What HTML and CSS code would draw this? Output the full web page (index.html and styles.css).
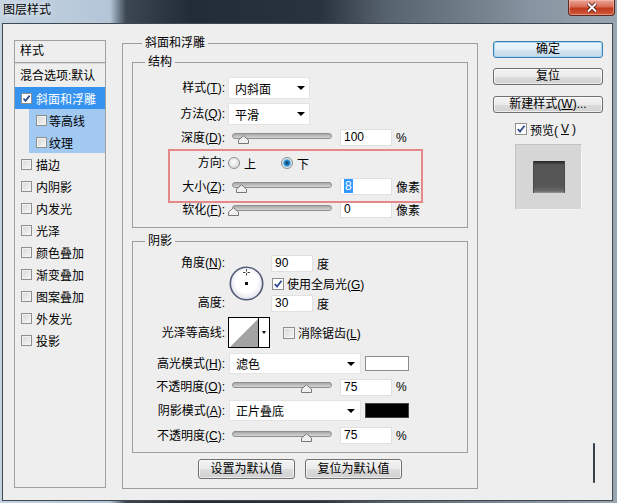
FILE: index.html
```html
<!DOCTYPE html>
<html lang="zh-CN">
<head>
  <meta charset="UTF-8">
  <title>图层样式</title>
  <link rel="stylesheet" href="styles.css">
</head>
<body>
  <div class="titlebar">
    <span class="title">图层样式</span>
    <button class="close-btn">
      <svg width="14" height="11" viewBox="0 0 14 11">
        <path d="M3 1.5L11 9.5M11 1.5L3 9.5" stroke="#4b1810" stroke-width="3.6"/>
        <path d="M3 1.5L11 9.5M11 1.5L3 9.5" stroke="#fff" stroke-width="1.8"/>
      </svg>
    </button>
  </div>

  <div class="client">
    <!-- left: style list -->
    <div class="style-list">
      <div class="list-head">样式</div>
      <div class="list-item blend">混合选项:默认</div>
      <div class="list-item active">
        <span class="check small on"><svg width="9" height="9" viewBox="0 0 9 9"><path d="M1.5 4.5L3.5 6.8L7.6 1.6" fill="none" stroke="#2c4a90" stroke-width="1.7"/></svg></span>斜面和浮雕
      </div>
      <div class="list-item sub"><span class="check small"></span>等高线</div>
      <div class="list-item sub"><span class="check small"></span>纹理</div>
      <div class="list-item"><span class="check small"></span>描边</div>
      <div class="list-item"><span class="check small"></span>内阴影</div>
      <div class="list-item"><span class="check small"></span>内发光</div>
      <div class="list-item"><span class="check small"></span>光泽</div>
      <div class="list-item"><span class="check small"></span>颜色叠加</div>
      <div class="list-item"><span class="check small"></span>渐变叠加</div>
      <div class="list-item"><span class="check small"></span>图案叠加</div>
      <div class="list-item"><span class="check small"></span>外发光</div>
      <div class="list-item"><span class="check small"></span>投影</div>
    </div>

    <!-- middle: bevel and emboss settings -->
    <div class="group main">
      <div class="group-title">斜面和浮雕</div>

      <div class="group inner structure">
        <div class="group-title">结构</div>

        <div class="row r-select first">
          <span class="lbl">样式(<u>T</u>):</span>
          <div class="select narrow"><span>内斜面</span><i class="caret"></i></div>
        </div>
        <div class="row r-select gap4">
          <span class="lbl">方法(<u>Q</u>):</span>
          <div class="select narrow"><span>平滑</span><i class="caret"></i></div>
        </div>
        <div class="row r-slider gap3">
          <span class="lbl">深度(<u>D</u>):</span>
          <div class="slider">
            <div class="track"></div>
            <span class="thumb" style="left:11%"><svg width="11" height="9" viewBox="0 0 11 9"><path d="M0.5 8.5V5L5.5 0.8L10.5 5V8.5Z" fill="#f0f0f0" stroke="#777"/></svg></span>
          </div>
          <span class="num-input">100</span>
          <span class="unit">%</span>
        </div>
        <div class="row r-radio gap6">
          <span class="lbl">方向:</span>
          <span class="radio"></span><span class="opt">上</span>
          <span class="radio on"></span><span class="opt">下</span>
        </div>
        <div class="row r-slider gap4">
          <span class="lbl">大小(<u>Z</u>):</span>
          <div class="slider">
            <div class="track"></div>
            <span class="thumb" style="left:9%"><svg width="11" height="9" viewBox="0 0 11 9"><path d="M0.5 8.5V5L5.5 0.8L10.5 5V8.5Z" fill="#f0f0f0" stroke="#777"/></svg></span>
          </div>
          <span class="num-input"><span class="sel">8</span></span>
          <span class="unit">像素</span>
        </div>
        <div class="row r-slider gap4">
          <span class="lbl">软化(<u>F</u>):</span>
          <div class="slider">
            <div class="track"></div>
            <span class="thumb" style="left:1%"><svg width="11" height="9" viewBox="0 0 11 9"><path d="M0.5 8.5V5L5.5 0.8L10.5 5V8.5Z" fill="#f0f0f0" stroke="#777"/></svg></span>
          </div>
          <span class="num-input">0</span>
          <span class="unit">像素</span>
        </div>
      </div>

      <div class="group inner shading">
        <div class="group-title">阴影</div>

        <div class="angle-block">
          <div class="lbl-col">
            <span class="lbl">角度(<u>N</u>):</span>
            <span class="lbl">高度:</span>
          </div>
          <svg class="dial" width="36" height="36" viewBox="0 0 36 36">
            <defs>
              <radialGradient id="dialFill" cx="50%" cy="45%" r="55%">
                <stop offset="0.6" stop-color="#ffffff"/>
                <stop offset="1" stop-color="#dde0ea"/>
              </radialGradient>
            </defs>
            <circle cx="17.5" cy="17.5" r="16.2" fill="url(#dialFill)" stroke="#535b78" stroke-width="1.6"/>
            <rect x="16" y="16" width="3" height="3" fill="#111"/>
            <path d="M17.5 3v2.5M17.5 7v2.5M14 6.5h2.5M18.5 6.5h2.5" stroke="#444" stroke-width="1"/>
          </svg>
          <div class="angle-fields">
            <div class="field-row"><span class="num-input short">90</span><span class="unit">度</span></div>
            <div class="field-row">
              <span class="check on"><svg width="10" height="10" viewBox="0 0 10 10"><path d="M1.8 5L4 7.5L8.5 1.8" fill="none" stroke="#2c4a90" stroke-width="1.8"/></svg></span>
              <span class="check-text">使用全局光(<u>G</u>)</span>
            </div>
            <div class="field-row"><span class="num-input short">30</span><span class="unit">度</span></div>
          </div>
        </div>

        <div class="row r-contour">
          <span class="lbl">光泽等高线:</span>
          <div class="contour">
            <svg class="contour-graph" width="31" height="31" viewBox="0 0 31 31">
              <rect x="0.5" y="0.5" width="30" height="30" fill="#fff" stroke="#000"/>
              <polygon points="2,30 30,2 30,30" fill="#a3a3a3"/>
            </svg>
            <span class="contour-drop"><i class="caret tiny"></i></span>
          </div>
          <span class="check aa"></span>
          <span class="check-text">消除锯齿(<u>L</u>)</span>
        </div>

        <div class="row r-mode gap5">
          <span class="lbl">高光模式(<u>H</u>):</span>
          <div class="select wide"><span>滤色</span><i class="caret"></i></div>
          <span class="swatch white"></span>
        </div>
        <div class="row r-opacity gap4">
          <span class="lbl">不透明度(<u>O</u>):</span>
          <div class="slider">
            <div class="track"></div>
            <span class="thumb" style="left:74%"><svg width="11" height="9" viewBox="0 0 11 9"><path d="M0.5 8.5V5L5.5 0.8L10.5 5V8.5Z" fill="#f0f0f0" stroke="#777"/></svg></span>
          </div>
          <span class="num-input">75</span>
          <span class="unit">%</span>
        </div>
        <div class="row r-mode gap4">
          <span class="lbl">阴影模式(<u>A</u>):</span>
          <div class="select wide"><span>正片叠底</span><i class="caret"></i></div>
          <span class="swatch black"></span>
        </div>
        <div class="row r-opacity2 gap6">
          <span class="lbl">不透明度(<u>C</u>):</span>
          <div class="slider">
            <div class="track"></div>
            <span class="thumb" style="left:74%"><svg width="11" height="9" viewBox="0 0 11 9"><path d="M0.5 8.5V5L5.5 0.8L10.5 5V8.5Z" fill="#f0f0f0" stroke="#777"/></svg></span>
          </div>
          <span class="num-input">75</span>
          <span class="unit">%</span>
        </div>
      </div>

      <div class="default-btns">
        <button class="btn wide">设置为默认值</button>
        <button class="btn wide">复位为默认值</button>
      </div>
    </div>

    <!-- right: dialog buttons and preview -->
    <div class="side">
      <button class="btn default">确定</button>
      <button class="btn">复位</button>
      <button class="btn">新建样式(<u>W</u>)...</button>
      <div class="preview-toggle">
        <span class="check on"><svg width="10" height="10" viewBox="0 0 10 10"><path d="M1.8 5L4 7.5L8.5 1.8" fill="none" stroke="#2c4a90" stroke-width="1.8"/></svg></span>
        预览(<u>V</u>)
      </div>
      <div class="preview-box"><div class="preview-swatch"></div></div>
    </div>

    <!-- annotation drawn over the screenshot -->
    <div class="annotation"></div>
    <div class="stray-mark"></div>
  </div>
</body>
</html>
```

FILE: styles.css
```css
* {
  box-sizing: border-box;
}

/* Page / window frame */
body {
  margin: 0;
  width: 617px;
  height: 503px;
  overflow: hidden;
  font-family: "Liberation Sans", "Noto Sans CJK SC", sans-serif;
  font-size: 12px;
  color: #000;
  background: linear-gradient(90deg, #c4d3e2 0, #b3c5d7 110px, #3c4752 126px, #222c36 190px, #29333d 320px, #56626c 385px, #6b7781 450px, #8693a0 530px, #99a6b0 617px);
}

u {
  text-decoration: underline;
  text-underline-offset: 1px;
}

/* Title bar */
.titlebar {
  height: 23px;
  display: flex;
  align-items: flex-start;
  padding: 0 2px 0 3px;
}
.title {
  line-height: 20px;
  text-shadow: 0 0 6px rgba(255,255,255,0.9);
}
.close-btn {
  margin-left: auto;
  width: 47px;
  height: 16px;
  padding: 0;
  border: 1px solid #5b2a22;
  border-top: 0;
  border-radius: 0 0 4px 4px;
  background: linear-gradient(#e9a595 0, #d76b55 45%, #c2391f 55%, #cf5a3c 100%);
  box-shadow: inset 0 0 0 1px rgba(255,200,190,0.5);
  display: flex;
  align-items: center;
  justify-content: center;
}
.close-btn svg {
  display: block;
}

/* Dialog body */
.client {
  position: relative;
  display: flex;
  align-items: flex-start;
  margin-left: 2px;
  width: 611px;
  height: 478px;
  border: 1px solid #3f4851;
  background: #eeeeee;
  padding-left: 11px;
}

/* Style list */
.style-list {
  width: 92px;
  height: 448px;
  margin-top: 16px;
  border: 1px solid #a0a0a0;
  flex-shrink: 0;
}
.list-head {
  height: 22px;
  line-height: 20px;
  padding-left: 5px;
  border-bottom: 1px solid #a0a0a0;
  box-shadow: 0 1px 0 #d8d8d8;
}
.list-item {
  height: 22px;
  display: flex;
  align-items: center;
  gap: 4px;
  padding-left: 6px;
  white-space: nowrap;
}
.list-item.blend {
  height: 24px;
  padding-left: 5px;
  padding-bottom: 2px;
}
.list-item.active {
  background: #3592ef;
  color: #fff;
}
.list-item.sub {
  margin-left: 14px;
  padding-left: 7px;
  gap: 2px;
  background: #a2c9f2;
}

/* Checkboxes and radios */
.check {
  display: inline-flex;
  align-items: center;
  justify-content: center;
  width: 12px;
  height: 12px;
  flex-shrink: 0;
  border: 1px solid #8e8f8f;
  background: linear-gradient(135deg, #d6d6d6, #f7f7f7);
  box-shadow: inset 0 0 0 1px #f2f2f2;
}
.check.small {
  width: 11px;
  height: 11px;
}
.check.on {
  background: #fff;
  box-shadow: none;
}
.check svg {
  display: block;
}
.check-text {
  margin-left: 3px;
  white-space: nowrap;
}

.radio {
  width: 12px;
  height: 12px;
  margin-left: 3px;
  border-radius: 50%;
  border: 1px solid #8e8f8f;
  background: radial-gradient(circle at 45% 40%, #ffffff 0, #f0f0f0 30%, #cfcfcf 100%);
  flex-shrink: 0;
}
.radio.on {
  background: radial-gradient(circle at 50% 50%, #0d3f66 0, #1f6fa8 2px, #46a3dc 3.2px, #cfe5f3 4.2px, #e8e8e8 5px, #cccccc 100%);
}
.opt {
  margin-left: 4px;
  margin-right: 22px;
}

/* Group boxes */
.group {
  border: 1px solid #9d9d9d;
}
.group-title {
  width: fit-content;
  margin-top: -9px;
  line-height: 16px;
  padding: 0 3px;
  background: #eeeeee;
}
.main {
  width: 356px;
  margin: 19px 0 0 16px;
  padding: 0 9px 9px;
  flex-shrink: 0;
}
.main > .group-title {
  margin-left: 10px;
}
.inner > .group-title {
  margin-left: 12px;
}
.structure {
  margin-top: 11px;
  padding-bottom: 8px;
}
.shading {
  margin-top: 13px;
  padding-bottom: 8px;
}

/* Rows */
.row {
  display: flex;
  align-items: center;
}
.row.first { margin-top: 7px; }
.row.gap3 { margin-top: 3px; }
.row.gap4 { margin-top: 4px; }
.row.gap5 { margin-top: 5px; }
.row.gap6 { margin-top: 6px; }
.r-select { height: 22px; }
.r-slider { height: 19px; }
.r-radio { height: 20px; }
.r-contour { height: 31px; margin-top: 5px; }
.r-mode { height: 21px; }
.r-opacity { height: 18px; }
.r-opacity2 { height: 17px; }

.lbl {
  width: 92px;
  flex-shrink: 0;
  text-align: right;
  white-space: nowrap;
  line-height: 14px;
}

/* Dropdowns */
.select {
  height: 100%;
  margin-left: 3px;
  display: flex;
  align-items: center;
  justify-content: space-between;
  padding: 0 4px 0 6px;
  background: #fff;
  border: 1px solid #e4e4e4;
}
.select.narrow {
  width: 82px;
}
.select.wide {
  width: 132px;
  margin-left: 4px;
  padding-right: 5px;
}
.caret {
  width: 0;
  height: 0;
  border-left: 4px solid transparent;
  border-right: 4px solid transparent;
  border-top: 4px solid #000;
}
.caret.tiny {
  border-left-width: 2.5px;
  border-right-width: 2.5px;
  border-top-width: 3px;
}

/* Sliders */
.slider {
  position: relative;
  width: 100px;
  height: 12px;
  margin-left: 7px;
  flex-shrink: 0;
}
.track {
  height: 6px;
  margin-top: 1px;
  border: 1px solid #8f8f8f;
  border-radius: 3px;
  background: linear-gradient(#a7a7a7, #d6d6d6);
}
.thumb {
  position: absolute;
  top: 3px;
  width: 11px;
  height: 9px;
  margin-left: -5px;
}
.thumb svg {
  display: block;
}

/* Number fields */
.num-input {
  width: 52px;
  height: 17px;
  margin-left: 8px;
  padding-left: 3px;
  line-height: 15px;
  background: #fff;
  border: 1px solid #e0e0e0;
  flex-shrink: 0;
}
.num-input.short {
  width: 42px;
  margin-left: 0;
}
.num-input .sel {
  background: #3399ff;
  color: #fff;
  padding: 0 1px;
}
.unit {
  margin-left: 4px;
  white-space: nowrap;
}

/* Angle / altitude block */
.angle-block {
  display: flex;
  align-items: center;
  height: 57px;
  margin-top: 6px;
}
.lbl-col {
  height: 100%;
  display: flex;
  flex-direction: column;
  justify-content: space-between;
}
.lbl-col .lbl {
  line-height: 17px;
}
.dial {
  display: block;
  margin-left: 4px;
  flex-shrink: 0;
}
.angle-fields {
  height: 100%;
  margin-left: 6px;
  display: flex;
  flex-direction: column;
  justify-content: space-between;
}
.field-row {
  display: flex;
  align-items: center;
}
.field-row .check {
  margin-left: 1px;
}

/* Gloss contour */
.contour {
  display: flex;
  margin-left: 3px;
}
.contour-graph {
  display: block;
}
.contour-drop {
  width: 11px;
  height: 31px;
  border: 1px solid #000;
  border-left: 0;
  background: #fff;
  display: flex;
  align-items: center;
  justify-content: center;
}
.check.aa {
  margin-left: 13px;
}

/* Colour swatches */
.swatch {
  width: 44px;
  height: 15px;
  margin-left: 4px;
  border: 1px solid #8c8c8c;
}
.swatch.white { background: #fff; }
.swatch.black { background: #000; border-color: #444; }

/* Buttons */
.btn {
  height: 17px;
  padding: 0;
  font: inherit;
  line-height: 15px;
  color: #000;
  text-align: center;
  border: 1px solid #707070;
  border-radius: 3px;
  background: linear-gradient(#f3f3f3 0, #ebebeb 50%, #dddddd 50%, #d0d0d0 100%);
  box-shadow: inset 0 0 0 1px rgba(255,255,255,0.6);
  white-space: nowrap;
}
.btn.default {
  border-color: #3c7fb1;
  background: linear-gradient(#eef6fb 0, #e2eef7 50%, #d2e3f0 50%, #c6dbeb 100%);
  box-shadow: inset 0 0 0 1px #a9d6f2;
}
.btn.wide {
  width: 97px;
  height: 20px;
  line-height: 18px;
}
.default-btns {
  display: flex;
  justify-content: center;
  gap: 10px;
  margin-top: 6px;
}

/* Right column */
.side {
  width: 110px;
  margin: 17px 0 0 15px;
  display: flex;
  flex-direction: column;
}
.side .btn + .btn {
  margin-top: 10px;
}
.side .btn:nth-child(3) {
  margin-top: 11px;
}
.preview-toggle {
  height: 14px;
  margin: 9px 0 0 22px;
  display: flex;
  align-items: center;
  gap: 3px;
}
.preview-box {
  width: 67px;
  height: 66px;
  margin: 8px 0 0 22px;
  background: #d6d6d6;
  border: 1px solid #c2c2c2;
  border-right-color: #f4f4f4;
  border-bottom-color: #f4f4f4;
  display: flex;
  align-items: center;
  justify-content: center;
}
.preview-swatch {
  width: 32px;
  height: 32px;
  background: linear-gradient(#232323 0, #3d3d3d 2px, #555 4px, #575757 80%, #6a6a6a 94%, #9a9a9a 100%);
  box-shadow: inset 1px 0 0 #4a4a4a, inset -1px 0 0 #4a4a4a;
}

/* Overlays on the screenshot */
.annotation {
  position: absolute;
  left: 165px;
  top: 125px;
  width: 255px;
  height: 54px;
  border: 2px solid rgba(228, 110, 112, 0.8);
}
.stray-mark {
  position: absolute;
  left: 590px;
  top: 419px;
  width: 2px;
  height: 40px;
  border-radius: 1px;
  background: #34404c;
}
```
